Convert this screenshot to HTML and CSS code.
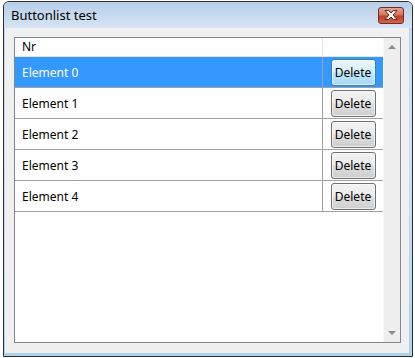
FILE: index.html
```html
<!DOCTYPE html>
<html lang="en">
<head>
  <meta charset="UTF-8" />
  <title>Buttonlist test</title>
  <link rel="stylesheet" href="styles.css">
</head>
<body>
  <div class="window">
    <div class="titlebar">
      <span class="title">Buttonlist test</span>
      <button class="close" aria-label="Close">
        <svg width="14" height="10" viewBox="0 0 14 10">
          <polygon points="1,0.5 4.5,0.5 7,3 9.5,0.5 13,0.5 9,5 13,9.5 9.5,9.5 7,7 4.5,9.5 1,9.5 5,5"
                   fill="#fff" stroke="#5a2a22" stroke-width="1" stroke-linejoin="round"/>
        </svg>
      </button>
    </div>

    <div class="client">
      <div class="listbox">
        <div class="list">
          <div class="list-header">
            <div class="cell name">Nr</div>
            <div class="cell action"></div>
          </div>
          <div class="row selected">
            <div class="cell name">Element 0</div>
            <div class="cell action"><button class="delete">Delete</button></div>
          </div>
          <div class="row">
            <div class="cell name">Element 1</div>
            <div class="cell action"><button class="delete">Delete</button></div>
          </div>
          <div class="row">
            <div class="cell name">Element 2</div>
            <div class="cell action"><button class="delete">Delete</button></div>
          </div>
          <div class="row">
            <div class="cell name">Element 3</div>
            <div class="cell action"><button class="delete">Delete</button></div>
          </div>
          <div class="row">
            <div class="cell name">Element 4</div>
            <div class="cell action"><button class="delete">Delete</button></div>
          </div>
        </div>
        <div class="scrollbar">
          <div class="arrow up"></div>
          <div class="arrow down"></div>
        </div>
      </div>
    </div>
  </div>
</body>
</html>
```

FILE: styles.css
```css
* {
  box-sizing: border-box;
}

body {
  margin: 0;
  background: #fff;
  font-family: 'Noto Sans', 'Open Sans', sans-serif;
  font-size: 12px;
  color: #000;
}

.window {
  margin: 1px 0 0 3px;
  width: 410px;
  height: 356px;
  border: 1px solid #2e2e2e;
  border-radius: 6px 6px 0 0;
  background: linear-gradient(180deg, #bcd2ea 0%, #cfdff0 40%, #a9d3f0 100%);
  display: flex;
  flex-direction: column;
}

.titlebar {
  height: 26px;
  display: flex;
  align-items: center;
  justify-content: space-between;
  padding: 0 8px 2px 7px;
  background: linear-gradient(180deg, #b7cfe9 0%, #d6e4f3 100%);
  border-radius: 5px 5px 0 0;
}

.title {
  font-size: 13px;
  margin-top: 1px;
}

.close {
  width: 26px;
  height: 17px;
  margin-top: 2px;
  padding: 0;
  border: 1px solid #6b2d24;
  border-radius: 3px;
  background: linear-gradient(180deg, #e6a290 0%, #d4745e 45%, #c23e26 55%, #d2634a 100%);
  display: flex;
  align-items: center;
  justify-content: center;
}

.client {
  flex: 1;
  margin: 0 3px 3px 1px;
  background: #f0f0f0;
  padding: 9px 8px 10px 9px;
}

.listbox {
  height: 100%;
  border: 1px solid #828790;
  background: #fff;
  display: flex;
}

.list {
  width: 368px;
}

.list-header {
  display: flex;
  height: 19px;
  border-bottom: 1px solid #e5e5e5;
}

.list-header .cell {
  line-height: 18px;
}

.list-header .name {
  border-right: 1px solid #e5e5e5;
}

.cell.name {
  width: 308px;
  padding-left: 7px;
}

.cell.action {
  width: 60px;
  display: flex;
  align-items: center;
  justify-content: center;
}

.row {
  display: flex;
  height: 31px;
  border-bottom: 1px solid #a0a0a0;
}

.row .name {
  border-right: 1px solid #a0a0a0;
  display: flex;
  align-items: center;
}

.row.selected {
  background: #3399ff;
  color: #fff;
}

.delete {
  width: 45px;
  height: 27px;
  padding: 0;
  font-family: inherit;
  font-size: 12px;
  color: #000;
  border: 1px solid #707070;
  border-radius: 3px;
  background: linear-gradient(180deg, #f2f2f2 0%, #ebebeb 48%, #dddddd 52%, #cfcfcf 100%);
  box-shadow: inset 0 0 0 1px rgba(255, 255, 255, 0.6);
}

.row.selected .delete {
  border-color: #3c7fb1;
  background: linear-gradient(180deg, #eaf6fd 0%, #d9f0fc 48%, #bee6fd 52%, #a7d9f5 100%);
}

.scrollbar {
  width: 17px;
  background: #eeeeee;
  border-left: 1px solid #f8f8f8;
  display: flex;
  flex-direction: column;
  justify-content: space-between;
  align-items: center;
  padding: 7px 0 7px;
}

.arrow {
  width: 0;
  height: 0;
  border-left: 4px solid transparent;
  border-right: 4px solid transparent;
}

.arrow.up {
  border-bottom: 4px solid #8a8a8a;
}

.arrow.down {
  border-top: 4px solid #8a8a8a;
}
```
